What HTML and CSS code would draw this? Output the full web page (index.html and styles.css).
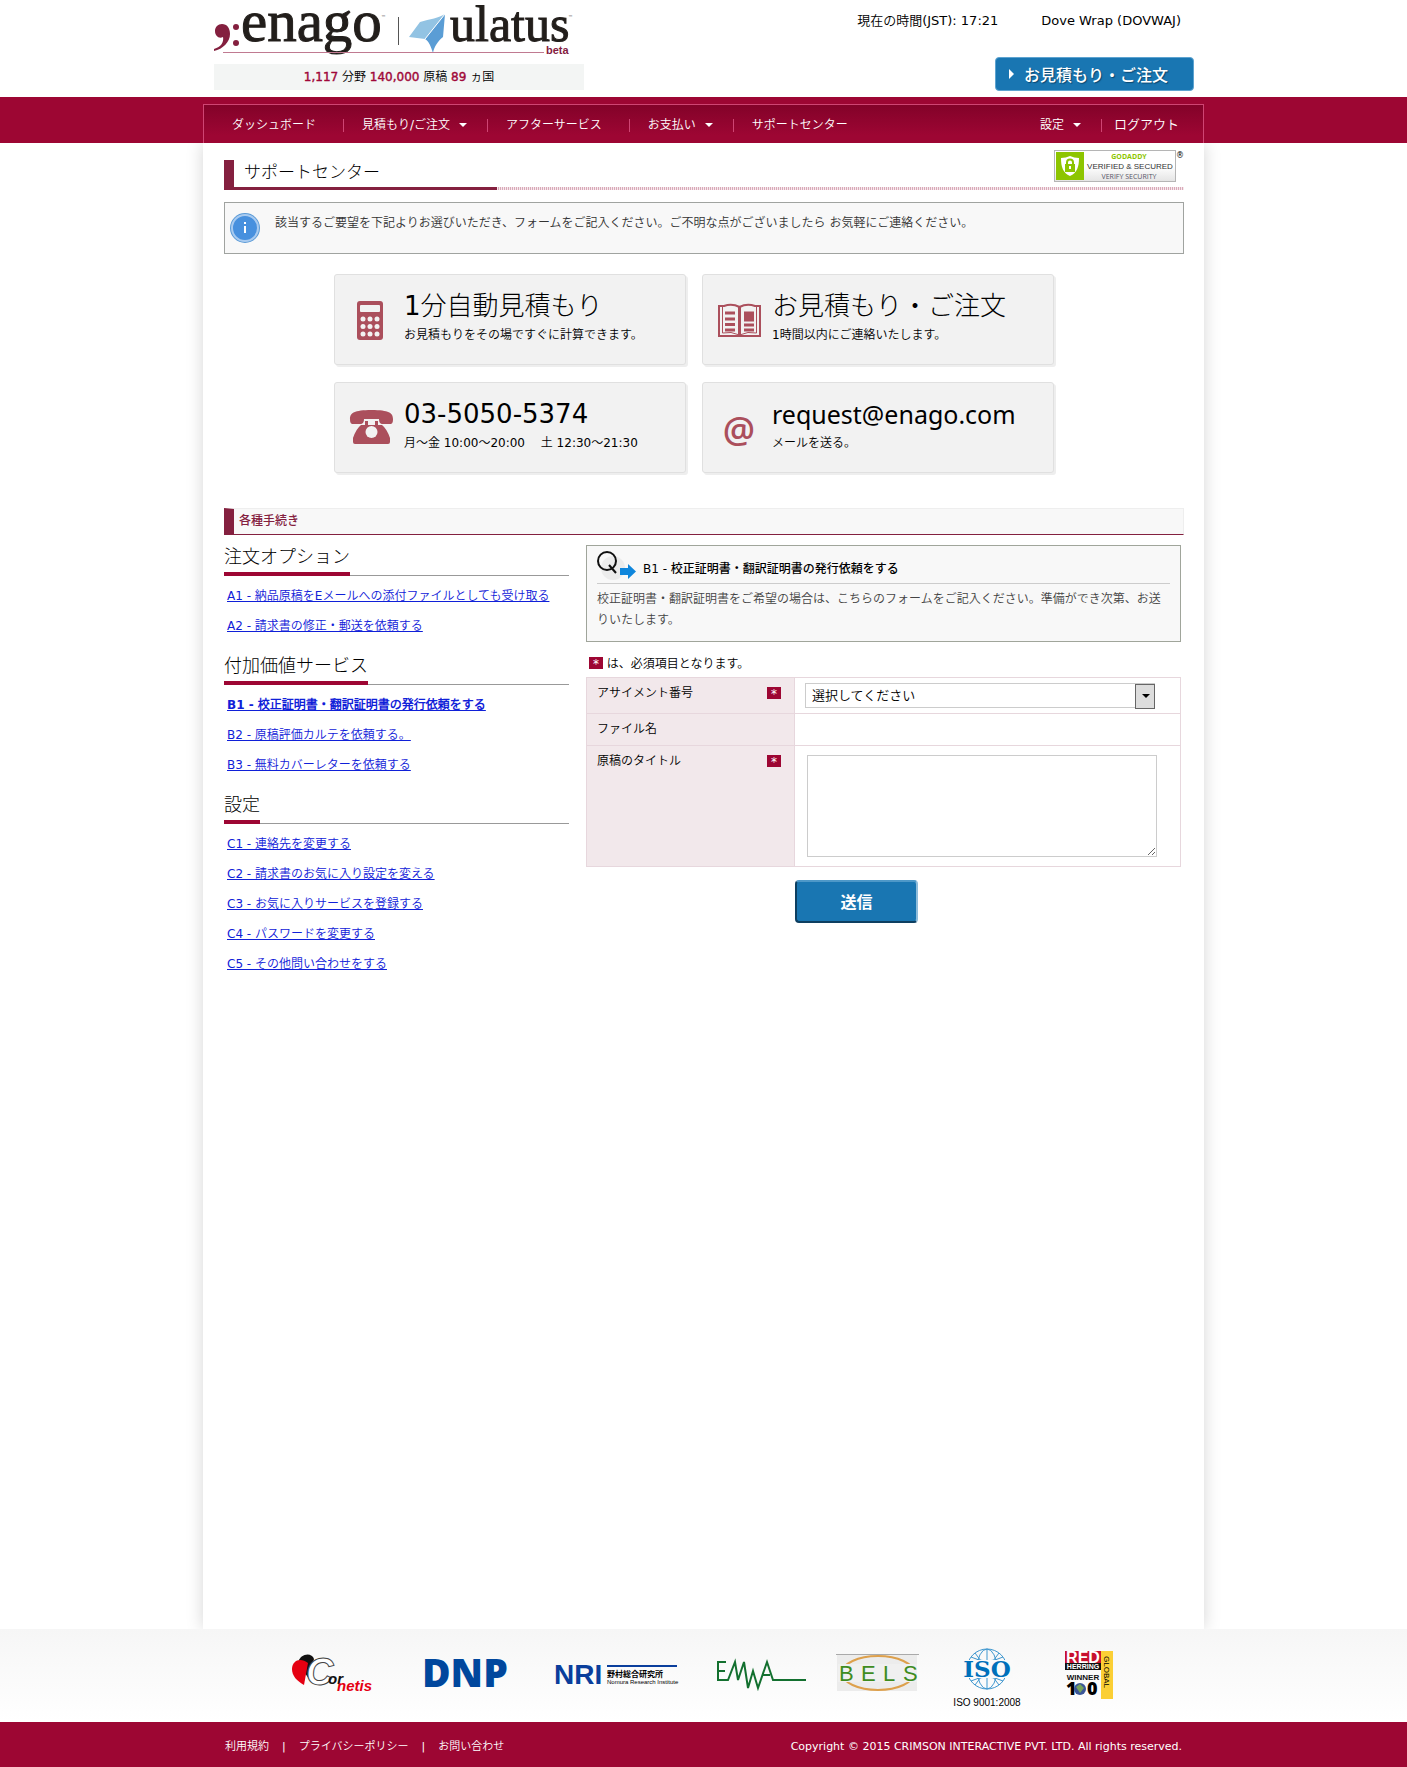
FILE: index.html
```html
<!DOCTYPE html>
<html lang="ja">
<head>
    <meta charset="UTF-8">
    <meta name="viewport" content="width=device-width, initial-scale=1.0">
    <title>サポートセンター</title>
    <link rel="stylesheet" href="styles.css">
</head>
<body>
    <header class="header">
        <div class="brand">
            <a href="#" class="logo" aria-label="enago ulatus">
                <svg width="370" height="52" viewBox="0 0 370 52">
                    <path d="M0 47C7 45 10 40 9 35C5 37 1 34 1 29C1 25 4 22 8 22C13 22 16 26 16 32C16 40 9 47 0 49Z" fill="#84203f"/>
                    <circle cx="22" cy="25" r="3" fill="#84203f"/>
                    <circle cx="22" cy="41" r="3" fill="#84203f"/>
                    <text x="27" y="39" class="logo-enago">enago</text>
                    <text x="167" y="17" class="logo-tm">™</text>
                    <path d="M184.500 15V43" stroke="#555"/>
                    <path d="M195 35L206 20C216 17 225 16 231 12L211 37Z" fill="#92c3e3"/>
                    <path d="M231 12L211 37C215 39 217 45 219 51C220 45 224 39 229 35Z" fill="#5a9dd5"/>
                    <path d="M231 12L211 37" stroke="#fff"/>
                    <text x="236" y="39" class="logo-ulatus">ulatus</text>
                    <text x="354" y="17" class="logo-tm">™</text>
                    <path d="M9 50.500H330" stroke="#c07a91"/>
                    <text x="332" y="52" class="logo-beta">beta</text>
                </svg>
            </a>
            <p class="stats"><b>1,117</b> 分野 <b>140,000</b> 原稿 <b>89</b> ヵ国</p>
        </div>
        <div class="account">
            <p class="account-info"><span>現在の時間(JST): 17:21</span><span>Dove Wrap (DOVWAJ)</span></p>
            <a href="#" class="quote-btn">お見積もり・ご注文</a>
        </div>
    </header>

    <div class="nav-bar">
        <nav class="nav">
            <ul>
                <li><a href="#">ダッシュボード</a></li>
                <li class="has-menu"><a href="#">見積もり/ご注文</a></li>
                <li><a href="#">アフターサービス</a></li>
                <li class="has-menu"><a href="#">お支払い</a></li>
                <li><a href="#">サポートセンター</a></li>
            </ul>
            <ul class="nav-right">
                <li class="has-menu"><a href="#">設定</a></li>
                <li class="logout"><a href="#">ログアウト</a></li>
            </ul>
        </nav>
    </div>

    <main class="content">
        <div class="page-title">
            <h1>サポートセンター</h1>
            <a href="#" class="seal" aria-label="GoDaddy Verified and Secured">
                <svg width="130" height="33" viewBox="0 0 130 33">
                    <defs>
                        <linearGradient id="seal-bg" x2="0" y2="1"><stop offset=".5" stop-color="#fff"/><stop offset="1" stop-color="#e4e4e4"/></linearGradient>
                    </defs>
                    <rect x=".5" y=".5" width="121" height="31" fill="url(#seal-bg)" stroke="#b5b5b5"/>
                    <rect x="2" y="2" width="28" height="28" fill="#8dc500"/>
                    <path d="M7 8Q12 8 16 6Q20 8 25 8C25 17 23 23 16 26C9 23 7 17 7 8Z" fill="#fff"/>
                    <path d="M13 15V12.500a3 3 0 0 1 6 0V15" fill="none" stroke="#8dc500" stroke-width="2"/>
                    <rect x="11" y="14" width="10" height="8" fill="#8dc500"/>
                    <rect x="15" y="16" width="2" height="3" fill="#fff"/>
                    <text x="75" y="9" class="seal-brand">GODADDY</text>
                    <text x="76" y="19" class="seal-main">VERIFIED &amp; SECURED</text>
                    <text x="75" y="29" class="seal-sub">VERIFY SECURITY</text>
                    <text x="122" y="8" class="seal-mark">®</text>
                </svg>
            </a>
        </div>

        <div class="notice">
            <svg width="30" height="30" viewBox="0 0 30 30">
                <circle cx="15" cy="15" r="15" fill="#5a9ad6"/>
                <circle cx="15" cy="15" r="13" fill="#4790de" stroke="#a9cbf0" stroke-width="2"/>
                <path d="M15 9V11M15 13V20" stroke="#fff" stroke-width="2"/>
            </svg>
            <p>該当するご要望を下記よりお選びいただき、フォームをご記入ください。ご不明な点がございましたら お気軽にご連絡ください。</p>
        </div>

        <div class="cards">
            <a href="#" class="card">
                <svg width="44" height="44" viewBox="0 0 44 44" fill="#ab4f5c">
                    <rect x="8" y="3" width="26" height="39" rx="3"/>
                    <g fill="#f2f2f2">
                        <rect x="11" y="7" width="20" height="7" rx="1"/>
                        <circle cx="14" cy="21" r="2.500"/><circle cx="21" cy="21" r="2.500"/><circle cx="28" cy="21" r="2.500"/>
                        <circle cx="14" cy="28.500" r="2.500"/><circle cx="21" cy="28.500" r="2.500"/><circle cx="28" cy="28.500" r="2.500"/>
                        <circle cx="14" cy="36" r="2.500"/><circle cx="21" cy="36" r="2.500"/><circle cx="28" cy="36" r="2.500"/>
                    </g>
                </svg>
                <div>
                    <h2>1分自動見積もり</h2>
                    <p>お見積もりをその場ですぐに計算できます。</p>
                </div>
            </a>
            <a href="#" class="card">
                <svg width="44" height="44" viewBox="0 0 44 44" fill="none" stroke="#ab4f5c">
                    <path d="M2 8V38H43V8H38Q30 5 22.500 9Q15 5 7 8H2Z" stroke-width="2"/>
                    <path d="M22.500 9V37" stroke-width="3"/>
                    <path d="M5.500 9V35Q14 33 22.500 37Q31 33 39.500 35V9" stroke-width="1"/>
                    <path d="M8 15H18M8 21H18M8 26.500H18M8 32H18M27 27H37M27 32H37" stroke-width="3"/>
                    <path d="M27 18.500H37" stroke-width="10"/>
                </svg>
                <div>
                    <h2>お見積もり・ご注文</h2>
                    <p>1時間以内にご連絡いたします。</p>
                </div>
            </a>
            <a href="#" class="card">
                <svg width="44" height="44" viewBox="0 0 44 44" fill="#ab4f5c">
                    <path d="M1 13C1 7 5 4 22.500 4S44 7 44 13C44 17 43 18 41 18H34C31 18 30 16 30 13H15C15 16 14 18 11 18H4C2 18 1 17 1 13Z"/>
                    <path d="M16 15V19H12Q7 23 4 32V36Q4 38 6 38H39Q41 38 41 36V32Q38 23 33 19H29V15H26V19H19V15Z"/>
                    <circle cx="22.500" cy="26" r="6" fill="#f2f2f2"/>
                </svg>
                <div>
                    <h2>03-5050-5374</h2>
                    <p>月～金 10:00～20:00　 土 12:30～21:30</p>
                </div>
            </a>
            <a href="#" class="card">
                <svg width="44" height="44" viewBox="0 0 44 44">
                    <text x="22" y="37" class="at-sign">@</text>
                </svg>
                <div>
                    <h2 class="mail">request@enago.com</h2>
                    <p>メールを送る。</p>
                </div>
            </a>
        </div>

        <h2 class="section-title">各種手続き</h2>

        <div class="columns">
            <div class="menu">
                <h3><span>注文オプション</span></h3>
                <ul>
                    <li><a href="#">A1 - 納品原稿をEメールへの添付ファイルとしても受け取る</a></li>
                    <li><a href="#">A2 - 請求書の修正・郵送を依頼する</a></li>
                </ul>
                <h3><span>付加価値サービス</span></h3>
                <ul>
                    <li class="active"><a href="#">B1 - 校正証明書・翻訳証明書の発行依頼をする</a></li>
                    <li><a href="#">B2 - 原稿評価カルテを依頼する。</a></li>
                    <li><a href="#">B3 - 無料カバーレターを依頼する</a></li>
                </ul>
                <h3><span>設定</span></h3>
                <ul>
                    <li><a href="#">C1 - 連絡先を変更する</a></li>
                    <li><a href="#">C2 - 請求書のお気に入り設定を変える</a></li>
                    <li><a href="#">C3 - お気に入りサービスを登録する</a></li>
                    <li><a href="#">C4 - パスワードを変更する</a></li>
                    <li><a href="#">C5 - その他問い合わせをする</a></li>
                </ul>
            </div>

            <form class="request">
                <div class="question">
                    <h4>
                        <svg width="40" height="30" viewBox="0 0 40 30">
                            <circle cx="16" cy="17" r="12" fill="#ececec"/>
                            <circle cx="10" cy="10" r="9" fill="none" stroke="#111" stroke-width="2"/>
                            <path d="M12 14L19 22" stroke="#111" stroke-width="2"/>
                            <path d="M23 17H31V13L39 20.500L31 28V24H23Z" fill="#0f86dc"/>
                        </svg>
                        B1 - 校正証明書・翻訳証明書の発行依頼をする
                    </h4>
                    <p>校正証明書・翻訳証明書をご希望の場合は、こちらのフォームをご記入ください。準備ができ次第、お送りいたします。</p>
                </div>
                <p class="required-note"><span class="star">*</span> は、必須項目となります。</p>
                <table>
                    <tr>
                        <th><div><label for="assignment">アサイメント番号</label><span class="star">*</span></div></th>
                        <td>
                            <div class="select">
                                <select id="assignment">
                                    <option>選択してください</option>
                                </select>
                            </div>
                        </td>
                    </tr>
                    <tr>
                        <th>ファイル名</th>
                        <td></td>
                    </tr>
                    <tr>
                        <th><div><label for="title">原稿のタイトル</label><span class="star">*</span></div></th>
                        <td><textarea id="title"></textarea></td>
                    </tr>
                </table>
                <button type="submit">送信</button>
            </form>
        </div>
    </main>

    <section class="partners">
        <div class="partners-inner">
            <svg width="105" height="62" viewBox="0 0 105 62" role="img" aria-label="Cornetis">
                <path d="M6 16C8 6 20 5 22 12L17 32Z" fill="#111"/>
                <path d="M0 22C0 13 9 10 16 16L12 38C5 34 0 29 0 22Z" fill="#e50012"/>
                <text x="14" y="38" class="cornetis-c">C</text>
                <text x="36" y="37" class="cornetis-or">or</text>
                <text x="45" y="44" class="cornetis-netis">netis</text>
            </svg>
            <svg width="102" height="62" viewBox="0 0 102 62">
                <text x="-3" y="40" class="dnp">DNP</text>
            </svg>
            <svg width="133" height="62" viewBox="0 0 133 62">
                <text x="-1" y="37" class="nri">NRI</text>
                <path d="M52 19H122" stroke="#0a3e9c" stroke-width="2"/>
                <text x="52" y="30" class="nri-ja">野村総合研究所</text>
                <text x="52" y="37" class="nri-en">Nomura Research Institute</text>
            </svg>
            <svg width="92" height="62" viewBox="0 0 92 62" role="img" aria-label="EMWA" fill="none" stroke="#13702f" stroke-width="2">
                <path d="M10 15H2V33H12L19 15L22 33L28 15L32 41L37 24L42 41L51 15L57 33H90M2 24H9M46 28H54"/>
            </svg>
            <svg width="92" height="62" viewBox="0 0 92 62">
                <rect x="1" y="8" width="80" height="36" fill="#ececec"/>
                <path d="M0 7.500H83" stroke="#aaa"/>
                <ellipse cx="42" cy="26" rx="36" ry="17" fill="none" stroke="#dda04c" stroke-width="2"/>
                <rect x="2" y="17" width="79" height="18" fill="#f0f0f0"/>
                <text x="3" y="34" class="bels">B</text>
                <text x="25" y="34" class="bels">E</text>
                <text x="47" y="34" class="bels">L</text>
                <text x="67" y="34" class="bels">S</text>
            </svg>
            <svg width="81" height="62" viewBox="0 0 81 62">
                <g fill="none" stroke="#3f97cf">
                    <circle cx="31" cy="22" r="20"/>
                    <ellipse cx="31" cy="22" rx="10" ry="20"/>
                    <path d="M31 2V42M15 10Q31 18 47 10M15 34Q31 26 47 34M19 6L43 38M43 6L19 38"/>
                </g>
                <rect x="6" y="13" width="51" height="18" fill="#fafafa"/>
                <text x="31" y="30" class="iso">ISO</text>
                <text x="31" y="59" class="iso-no">ISO 9001:2008</text>
            </svg>
            <svg width="48" height="62" viewBox="0 0 48 62">
                <rect x="0" y="4" width="36" height="13" fill="#c8102e"/>
                <rect x="0" y="16" width="36" height="7" fill="#111"/>
                <rect x="36" y="4" width="12" height="48" fill="#fbcf35"/>
                <text x="18" y="16" class="red-name">RED</text>
                <text x="18" y="22" class="red-herring">HERRING</text>
                <text x="18" y="33" class="red-winner">WINNER</text>
                <text x="1" y="48" class="red-hundred">1</text>
                <circle cx="15" cy="42" r="6" fill="#3c5698"/>
                <path d="M11 40L15 37L19 41L15 46Z" fill="#77a35c"/>
                <text x="22" y="48" class="red-hundred">0</text>
                <text transform="translate(39 9) rotate(90)" class="red-global">GLOBAL</text>
            </svg>
        </div>
    </section>

    <footer class="footer">
        <div class="footer-inner">
            <ul>
                <li><a href="#">利用規約</a></li>
                <li><a href="#">プライバシーポリシー</a></li>
                <li><a href="#">お問い合わせ</a></li>
            </ul>
            <p>Copyright © 2015 CRIMSON INTERACTIVE PVT. LTD. All rights reserved.</p>
        </div>
    </footer>
</body>
</html>
```
FILE: styles.css
```css
* {
    box-sizing: border-box;
}
body {
    margin: 0;
    min-height: 100vh;
    display: flex;
    flex-direction: column;
    font-family: "DejaVu Sans", "Noto Sans CJK JP DemiLight", "Noto Sans CJK JP", sans-serif;
    font-size: 12px;
    line-height: 20px;
    color: #000;
    background: #fff;
}
h1, h2, h3, h4, p, ul {
    margin: 0;
    padding: 0;
    font-weight: 400;
}
h1, h2, h3 {
    font-family: "DejaVu Sans", "Noto Sans CJK JP Light", "Noto Sans CJK JP", sans-serif;
}
ul {
    list-style: none;
}
svg {
    display: block;
    flex: none;
    overflow: visible;
}
a {
    color: inherit;
    text-decoration: none;
}

/* Header */
.header {
    width: 100%;
    max-width: 1001px;
    height: 97px;
    margin: 0 auto;
    padding: 2px 10px 0 11px;
    display: flex;
    justify-content: space-between;
}
.logo-enago,
.logo-ulatus {
    font-family: "Liberation Serif", serif;
    font-size: 59px;
    fill: #221e1b;
    stroke: #221e1b;
    stroke-width: 1px;
}
.logo-ulatus {
    font-size: 50px;
}
.logo-tm {
    font-size: 5px;
    fill: #555;
}
.logo-beta {
    font-family: "Liberation Sans", sans-serif;
    font-size: 11px;
    font-weight: bold;
    fill: #84203f;
}
.stats {
    width: 370px;
    margin-top: 10px;
    line-height: 26px;
    text-align: center;
    background: #f3f5f4;
}
.stats b {
    color: #a00738;
    font-weight: 400;
    -webkit-text-stroke: 0.4px #a00738;
}
.account {
    display: flex;
    flex-direction: column;
    align-items: flex-end;
}
.account-info {
    display: flex;
    gap: 43px;
    padding: 9px 13px 0 0;
    font-size: 13px;
}
.quote-btn {
    width: 199px;
    margin-top: 26px;
    border: 1px solid #5da3d0;
    border-radius: 4px;
    background: #1976b2;
    color: #fff;
    font-family: "Noto Sans CJK JP", sans-serif;
    font-size: 16px;
    font-weight: 500;
    line-height: 32px;
    display: flex;
    align-items: center;
    gap: 10px;
    padding-left: 13px;
    text-shadow: 1px 1px 1px #0a4770;
}
.quote-btn::before {
    content: "";
    border: 5px solid transparent;
    border-left-color: #fff;
    border-right-width: 0;
}

/* Navigation */
.nav-bar {
    position: relative;
    padding-top: 7px;
    background: #9d0633;
}
.nav {
    max-width: 1001px;
    height: 39px;
    margin: 0 auto;
    padding: 2px 5px 0 9px;
    border: 1px solid #cf4573;
    border-bottom: 0;
    background: linear-gradient(#830229, #9d0633 80%);
    color: #fff;
    display: flex;
    justify-content: space-between;
    align-items: center;
}
.nav ul {
    display: flex;
}
.nav li {
    padding: 0 27px 0 19px;
    display: flex;
    align-items: center;
    position: relative;
}
.nav li + li::before {
    content: "";
    position: absolute;
    left: 0;
    width: 1px;
    height: 13px;
    background: #cf4573;
}
.nav .has-menu {
    padding-right: 20px;
}
.nav .has-menu::after {
    content: "";
    margin-left: 9px;
    border: 4px solid transparent;
    border-top-color: #fff;
    border-bottom-width: 0;
}
.nav .logout {
    padding: 0 19px 0 13px;
    font-size: 13px;
}

/* Content */
.content {
    flex: 1;
    width: 100%;
    max-width: 1001px;
    margin: 0 auto;
    padding: 7px 20px 40px 21px;
    background: #fff;
    box-shadow: 0 0 16px rgba(0, 0, 0, 0.17);
}
.page-title {
    height: 40px;
    display: flex;
    justify-content: space-between;
    align-items: flex-start;
    background: repeating-linear-gradient(90deg, #d9a9b8 0 1px, #f6e9ed 1px 2px) bottom / 100% 3px no-repeat;
}
.page-title h1 {
    width: 273px;
    height: 30px;
    margin-top: 10px;
    padding-left: 10px;
    border-left: 10px solid #84203f;
    border-bottom: 3px solid #84203f;
    font-size: 17px;
    line-height: 24px;
}
.seal-brand,
.seal-main,
.seal-sub {
    font-family: "Open Sans", sans-serif;
    font-size: 7px;
    font-weight: bold;
    text-anchor: middle;
    fill: #8dc500;
}
.seal-main {
    font-family: "Liberation Sans", sans-serif;
    font-size: 8px;
    font-weight: normal;
    fill: #333;
}
.seal-sub {
    font-weight: normal;
    fill: #556;
}
.seal-mark {
    font-size: 8px;
}
.notice {
    min-height: 52px;
    margin-top: 12px;
    padding: 10px 5px;
    border: 1px solid #a0a3a0;
    background: #f8f8f8;
    color: #333;
    display: flex;
    gap: 15px;
}

/* Contact cards */
.cards {
    width: 75%;
    margin: 20px auto 35px 110px;
    display: grid;
    grid-template-columns: 1fr 1fr;
    gap: 17px 16px;
}
.card {
    height: 91px;
    padding: 16px 14px;
    border: 1px solid #e0e0e0;
    border-radius: 3px;
    background: #f2f2f2;
    box-shadow: 2px 2px 0 #eee;
    display: flex;
    gap: 11px;
}
.card svg {
    margin-top: 7px;
}
.card h2 {
    font-size: 26px;
    line-height: 30px;
}
.card .mail {
    font-family: "Noto Sans", sans-serif;
    font-size: 25px;
}
.card p {
    margin-top: 4px;
}
.at-sign {
    font-family: "Open Sans", sans-serif;
    font-size: 36px;
    font-weight: 600;
    text-anchor: middle;
    fill: #ab4f5c;
}

/* Procedures */
.section-title {
    padding-left: 5px;
    border: 1px solid #eee;
    border-left: 10px solid #84203f;
    border-bottom-color: #84203f;
    background: #f8f8f8;
    color: #84203f;
    font-family: "DejaVu Sans", "Noto Sans CJK JP", sans-serif;
    font-size: 12px;
    font-weight: 500;
    line-height: 25px;
}
.columns {
    margin-top: 9px;
    display: grid;
    grid-template-columns: 345fr 595fr;
    gap: 17px;
    padding-right: 3px;
}
.menu h3 {
    margin-bottom: 5px;
    display: flex;
    font-size: 18px;
    line-height: 26px;
    background: linear-gradient(#999, #999) bottom / 100% 1px no-repeat;
}
.menu h3 span {
    padding-bottom: 2px;
    border-bottom: 4px solid #9d0633;
}
.menu ul {
    margin-bottom: 12px;
    padding-left: 3px;
    line-height: 30px;
}
.menu a {
    color: #1020d8;
    text-decoration: underline;
}
.menu .active {
    font-weight: bold;
}
.question {
    height: 97px;
    padding: 5px 10px;
    margin-top: 1px;
    border: 1px solid #a0a59b;
    background: #f8f8f8;
    color: #444;
}
.question h4 {
    height: 33px;
    margin-bottom: 5px;
    border-bottom: 1px solid #ccc;
    display: flex;
    gap: 6px;
    color: #000;
    font-family: "DejaVu Sans", "Noto Sans CJK JP", sans-serif;
    font-size: 12px;
    font-weight: 500;
    line-height: 36px;
}
.question p {
    line-height: 21px;
}
.required-note {
    padding: 12px 3px 3px;
}
.star {
    width: 14px;
    height: 12px;
    display: inline-block;
    background: #9d0633;
    color: #fff;
    line-height: 14px;
    text-align: center;
}
.request table {
    width: 100%;
    border-collapse: collapse;
    table-layout: fixed;
}
.request th,
.request td {
    padding: 5px 10px;
    border: 1px solid #e7d7dd;
    vertical-align: top;
    text-align: left;
    font-weight: 400;
}
.request th {
    width: 208px;
    height: 32px;
    background: #f2e8eb;
}
.request th div {
    display: flex;
    justify-content: space-between;
    padding-right: 3px;
}
.request th .star {
    margin-top: 4px;
}
.select {
    width: 350px;
    max-width: 100%;
    position: relative;
}
.select::before {
    content: "";
    position: absolute;
    right: 0;
    top: 1px;
    width: 18px;
    height: 23px;
    border: 1px solid #666;
    background: #ddd;
    pointer-events: none;
}
.select::after {
    content: "";
    position: absolute;
    right: 5px;
    top: 11px;
    border: 4px solid transparent;
    border-top-color: #000;
    border-bottom-width: 0;
    pointer-events: none;
}
.select select {
    appearance: none;
    display: block;
    width: 100%;
    height: 25px;
    padding: 0 6px;
    border: 1px solid #ccc;
    border-radius: 0;
    background: #fff;
    color: #000;
    font: inherit;
    font-size: 13px;
}
.request textarea {
    display: block;
    width: 350px;
    max-width: 100%;
    height: 102px;
    margin: 4px 2px;
    border: 1px solid #ccc;
    font: inherit;
}
.request button {
    width: 123px;
    height: 43px;
    margin: 13px 0 0 209px;
    padding: 0 0 2px;
    border: 2px solid #135b8a;
    border-color: #4d98c8 #8fbddb #0d3f61 #0d3f61;
    border-radius: 4px;
    background: #1976b2;
    color: #fff;
    font-family: "Noto Sans CJK JP", sans-serif;
    font-size: 16px;
    font-weight: bold;
    line-height: 20px;
}

/* Partner logos */
.partners {
    position: relative;
    background: linear-gradient(#f6f6f6, #fff);
}
.partners-inner {
    max-width: 1001px;
    height: 93px;
    margin: 0 auto;
    padding: 18px 0 0 89px;
    display: flex;
    gap: 28px;
}
.partners text {
    font-family: "Liberation Sans", sans-serif;
}
.partners .cornetis-c,
.partners .cornetis-or,
.partners .cornetis-netis {
    font-size: 38px;
    font-style: italic;
    font-weight: bold;
    fill: #fff;
    stroke: #444;
}
.partners .cornetis-or {
    font-size: 15px;
    fill: #111;
    stroke: none;
}
.partners .cornetis-netis {
    font-size: 15px;
    fill: #e50012;
    stroke: none;
}
.partners .dnp {
    font-family: "Open Sans", sans-serif;
    font-size: 39px;
    font-weight: 800;
    fill: #00479d;
}
.partners .nri {
    font-size: 28px;
    font-weight: bold;
    fill: #0a3e9c;
}
.partners .nri-ja {
    font-family: "Noto Sans CJK JP", sans-serif;
    font-size: 8px;
    font-weight: bold;
}
.partners .nri-en {
    font-size: 6px;
}
.partners .bels {
    font-size: 22px;
    fill: #3f8c1f;
}
.partners .iso {
    font-family: "DejaVu Serif", serif;
    font-size: 23px;
    font-weight: bold;
    text-anchor: middle;
    fill: #0070ba;
}
.partners .iso-no {
    font-size: 10px;
    text-anchor: middle;
}
.partners .red-name,
.partners .red-herring,
.partners .red-winner {
    font-size: 16px;
    font-weight: bold;
    text-anchor: middle;
    fill: #fff;
}
.partners .red-herring {
    font-size: 7px;
}
.partners .red-winner {
    font-size: 8px;
    fill: #111;
}
.partners .red-hundred {
    font-family: "Open Sans", sans-serif;
    font-size: 18px;
    font-weight: 800;
}
.partners .red-global {
    font-size: 8px;
}

/* Footer */
.footer {
    position: relative;
    background: #9d0633;
    color: #fff;
    font-size: 11px;
}
.footer-inner {
    max-width: 1001px;
    margin: 0 auto;
    padding: 15px 22px 10px;
    display: flex;
    justify-content: space-between;
}
.footer ul {
    display: flex;
}
.footer li + li::before {
    content: "|";
    margin: 0 13px;
}
```
